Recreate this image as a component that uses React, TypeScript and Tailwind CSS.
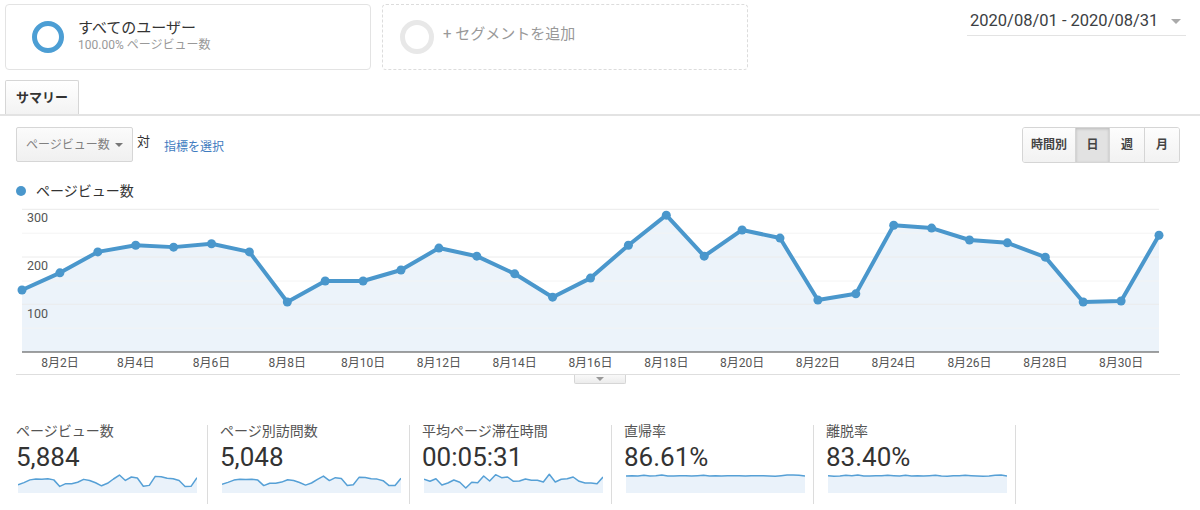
import React from "react";

// page views per day, 8/1 .. 8/31
const pageViews = [
  130, 166, 210, 224, 220, 227, 210, 105, 149, 149, 172, 218, 201, 164, 115,
  155, 224, 287, 201, 256, 239, 109, 122, 266, 260, 235, 229, 199, 105, 107,
  245,
];

const X0 = 6;
const X1 = 1143;
const BASE = 151;
const K = 0.4767;

const px = (i: number) => X0 + (i * (X1 - X0)) / 30;
const py = (v: number) => BASE - v * K;

interface Metric {
  title: string;
  value: string;
  ys: number[];
}

const SW = 179;
const SB = 22;

const toSpark = (vals: number[]) => vals.map((v) => SB - (v / 320) * 20);

const metrics: Metric[] = [
  { title: "ページビュー数", value: "5,884", ys: toSpark(pageViews) },
  {
    title: "ページ別訪問数",
    value: "5,048",
    ys: toSpark(pageViews.map((v) => v * 0.84 + 30)),
  },
  {
    title: "平均ページ滞在時間",
    value: "00:05:31",
    ys: [
      8.3, 10.3, 7.7, 14, 12, 9, 11.3, 17, 11.3, 11.7, 5, 10, 3.7, 6.7, 6, 10.3,
      10, 8, 9.3, 9.3, 11, 3.3, 11, 8.3, 7.7, 6, 10.3, 12, 12, 12.7, 6,
    ],
  },
  {
    title: "直帰率",
    value: "86.61%",
    ys: [
      5, 4.7, 5, 4.3, 5, 4.7, 4, 5, 5, 4.7, 4.7, 5, 4.7, 4.3, 5, 4.7, 5, 4.7,
      4.7, 4.7, 5, 4.7, 4.7, 4.7, 5, 5.3, 4.7, 4, 4, 4.3, 5,
    ],
  },
  {
    title: "離脱率",
    value: "83.40%",
    ys: [
      4.7, 5.3, 5, 4.3, 4.7, 4, 5, 5, 4.7, 4.7, 4.3, 4.7, 5, 4.3, 5, 4.7, 5,
      4.7, 4.3, 5, 5.3, 4.7, 4.7, 4.3, 4.7, 5, 5.3, 5, 4.3, 4, 5,
    ],
  },
];

function Sparkline({ ys }: { ys: number[] }) {
  const pts = ys.map((y, i) => `${(i * SW) / (ys.length - 1)},${y}`);
  const line = pts.join(" ");
  const area = `0,${SB} ${line} ${SW},${SB}`;
  return (
    <svg width={SW} height={24} className="block ml-[2px]">
      <polygon points={area} fill="#eaf2fa" />
      <polyline
        points={line}
        fill="none"
        stroke="#56a0d6"
        strokeWidth={1.5}
        strokeLinejoin="round"
      />
    </svg>
  );
}

function MainChart() {
  const line = pageViews.map((v, i) => `${px(i)},${py(v)}`).join(" ");
  const area = `${X0},${BASE} ${line} ${X1},${BASE}`;
  const grid = [
    { y: 8.3, c: "#e9e9e9" },
    { y: 32.2, c: "#f4f4f4" },
    { y: 56, c: "#ececec" },
    { y: 80, c: "#f4f4f4" },
    { y: 103.3, c: "#ececec" },
    { y: 127.2, c: "#f4f4f4" },
  ];
  return (
    <svg width={1164} height={173} className="block">
      <polygon points={area} fill="#ecf3fa" />
      {grid.map((g) => (
        <line
          key={g.y}
          x1={X0}
          x2={X1}
          y1={g.y}
          y2={g.y}
          stroke={g.c}
          strokeWidth={1}
          opacity={0.9}
        />
      ))}
      <line x1={X0} x2={X1} y1={BASE} y2={BASE} stroke="#444" strokeWidth={1} />
      {[
        ["300", 21],
        ["200", 69],
        ["100", 117],
      ].map(([t, y]) => (
        <text key={t} x={11} y={y as number} fontSize={12.5} fill="#555">
          {t}
        </text>
      ))}
      {pageViews.map((_, i) =>
        i % 2 === 1 ? (
          <text
            key={i}
            x={px(i)}
            y={166}
            fontSize={12}
            fill="#555"
            textAnchor="middle"
          >
            {`8月${i + 1}日`}
          </text>
        ) : null
      )}
      <polyline
        points={line}
        fill="none"
        stroke="#4a97cc"
        strokeWidth={4}
        strokeLinejoin="round"
        strokeLinecap="round"
      />
      {pageViews.map((v, i) => (
        <circle key={i} cx={px(i)} cy={py(v)} r={4.5} fill="#4a97cc" />
      ))}
    </svg>
  );
}

export default function App() {
  return (
    <div className="w-[1200px] h-[510px] overflow-hidden bg-white font-[Roboto,'Noto_Sans_CJK_JP',sans-serif] text-[#333]">
      {/* segments + date range */}
      <div className="flex items-start px-[5px] pt-[4px]">
        <div className="w-[366px] h-[66px] border border-[#e3e3e3] rounded-[4px] flex items-center pl-[26px]">
          <div className="w-[32px] h-[32px] rounded-full border-[5px] border-[#4c9ed4]" />
          <div className="ml-[14px] -mt-[3px]">
            <div className="text-[15px] leading-[19px] text-[#333]">すべてのユーザー</div>
            <div className="text-[12px] leading-[15px] text-[#999]">100.00% ページビュー数</div>
          </div>
        </div>
        <div className="ml-[11px] w-[366px] h-[66px] border border-dashed border-[#dcdcdc] rounded-[4px] flex items-center pl-[17px]">
          <div className="w-[34px] h-[34px] rounded-full border-[5px] border-[#e8e8e8]" />
          <div className="ml-[9px] text-[15px] text-[#999] -mt-[6px]">+ セグメントを追加</div>
        </div>
        <div className="ml-auto mr-[9px] mt-[3px] w-[219px] h-[29px] border-b border-[#e3e3e3] flex items-center pl-[3px]">
          <span className="text-[16.5px] leading-[20px] text-[#3c4043]">2020/08/01 - 2020/08/31</span>
          <span className="ml-auto mr-[5px] border-x-[5px] border-x-transparent border-t-[5px] border-t-[#aaa]" />
        </div>
      </div>

      {/* tabs */}
      <div className="mt-[10px] h-[36px] border-b-2 border-[#e3e3e3] px-[5px] flex">
        <div className="w-[74px] h-[34px] border border-b-0 border-[#d6d6d6] rounded-t-[2px] bg-gradient-to-b from-[#ffffff] to-[#f3f3f3] flex items-center justify-center">
          <span className="text-[13px] font-bold text-[#333]">サマリー</span>
        </div>
      </div>

      {/* controls */}
      <div className="mt-[11px] pl-[16px] pr-[20px] flex items-start">
        <div className="w-[117px] h-[35px] border border-[#d6d6d6] rounded-[2px] bg-gradient-to-b from-[#fbfbfb] to-[#f0f0f0] flex items-center pl-[9px] pr-[9px]">
          <span className="text-[12px] text-[#808080]">ページビュー数</span>
          <span className="ml-auto border-x-[4px] border-x-transparent border-t-[4px] border-t-[#777]" />
        </div>
        <span className="ml-[4px] mt-[5px] text-[13px] text-[#333]">対</span>
        <span className="ml-[14px] mt-[11px] text-[12px] text-[#3f7cbf]">指標を選択</span>
        <div className="ml-auto h-[36px] flex border border-[#d5d5d5] rounded-[3px] overflow-hidden">
          <div className="w-[52px] flex items-center justify-center bg-gradient-to-b from-[#fdfdfd] to-[#f2f2f2] text-[12px] font-bold text-[#444]">時間別</div>
          <div className="w-[34px] flex items-center justify-center border-l border-[#d5d5d5] bg-[#e2e2e2] shadow-[inset_0_1px_3px_rgba(0,0,0,0.18)] text-[12px] font-bold text-[#444]">日</div>
          <div className="w-[35px] flex items-center justify-center border-l border-[#d5d5d5] bg-gradient-to-b from-[#fdfdfd] to-[#f2f2f2] text-[12px] font-bold text-[#444]">週</div>
          <div className="w-[35px] flex items-center justify-center border-l border-[#d5d5d5] bg-gradient-to-b from-[#fdfdfd] to-[#f2f2f2] text-[12px] font-bold text-[#444]">月</div>
        </div>
      </div>

      {/* legend */}
      <div className="mt-[19px] h-[18px] pl-[16px] flex items-center">
        <span className="w-[10px] h-[10px] rounded-full bg-[#4a97cc]" />
        <span className="ml-[10px] text-[14px] text-[#333]">ページビュー数</span>
      </div>

      {/* chart */}
      <div className="mt-[1px] ml-[16px] mr-[20px] border-b border-[#dedede]">
        <MainChart />
      </div>
      <div className="flex justify-center">
        <div className="w-[52px] h-[9px] border border-t-0 border-[#d6d6d6] rounded-b-[2px] bg-gradient-to-b from-[#f9f9f9] to-[#ececec] flex justify-center pt-[2px]">
          <span className="border-x-[4px] border-x-transparent border-t-[4px] border-t-[#999]" />
        </div>
      </div>

      {/* metrics */}
      <div className="mt-[41px] pl-[16px] flex">
        {metrics.map((m, i) => (
          <div
            key={m.title}
            className={
              i === 0
                ? "w-[192px] h-[79px] border-r border-[#dcdcdc]"
                : "w-[202px] h-[79px] border-r border-[#dcdcdc] pl-[12px]"
            }
          >
            <div className="-mt-[2px] text-[14px] leading-[16px] text-[#555]">{m.title}</div>
            <div className="mt-[5px] text-[26px] leading-[26px] text-[#333]">{m.value}</div>
            <div className="mt-[1px]">
              <Sparkline ys={m.ys} />
            </div>
          </div>
        ))}
      </div>
    </div>
  );
}
